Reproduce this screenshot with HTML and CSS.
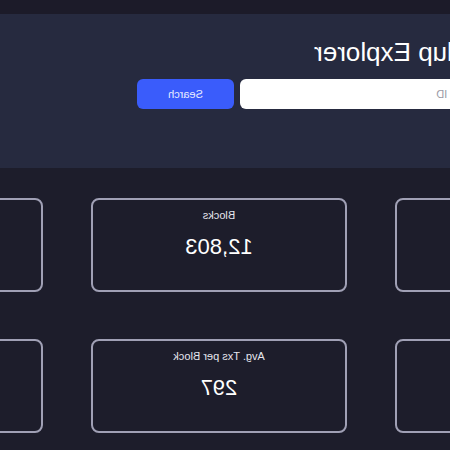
FILE: index.html
```html
<!DOCTYPE html>
<html lang="en">
<head>
<meta charset="utf-8">
<title>Rollup Explorer</title>
<link rel="stylesheet" href="styles.css">
</head>
<body>
<div class="page">
  <div class="topbar"></div>
  <header class="hero">
    <div class="hero-inner">
      <h1 class="title">Rollup Explorer</h1>
      <form class="search">
        <input class="search-input" type="text" placeholder="Search by Block Number, Tx Hash or ID">
        <button class="search-btn" type="button">Search</button>
      </form>
    </div>
  </header>
  <main class="stats">
    <div class="card"><div class="label">Transactions</div><div class="value">3,802,511</div></div>
    <div class="card"><div class="label">Blocks</div><div class="value">12,803</div></div>
    <div class="card"><div class="label">Batches</div><div class="value">1,204</div></div>
    <div class="card"><div class="label">Avg. Block Time</div><div class="value">3.0s</div></div>
    <div class="card"><div class="label">Avg. Txs per Block</div><div class="value">297</div></div>
    <div class="card"><div class="label">Pending Txs</div><div class="value">18</div></div>
  </main>
</div>
</body>
</html>
```
FILE: styles.css
```css
html, body {
  margin: 0;
  padding: 0;
  background: #1d1d2b;
  overflow: hidden;
}
body {
  width: 450px;
  height: 450px;
  font-family: "Liberation Sans", Arial, sans-serif;
}
.page {
  width: 450px;
  height: 450px;
  transform: scaleX(-1);
  overflow: hidden;
  background: #1d1d2b;
}
.topbar {
  height: 14px;
  background: #1c1b29;
}
.hero {
  height: 154px;
  background: #262a3f;
}
.hero-inner {
  width: 600px;
  margin-left: -240px;
  padding-top: 24px;
  display: flex;
  flex-direction: column;
  align-items: center;
}
.title {
  margin: 0 26px 0 0;
  font-size: 26px;
  line-height: 28px;
  font-weight: 400;
  color: #ffffff;
  text-align: center;
}
.search {
  margin: 13px 0 0 0;
  width: 506px;
  display: flex;
  gap: 6px;
}
.search-input {
  flex: 1;
  height: 30px;
  box-sizing: border-box;
  border: none;
  border-radius: 6px;
  background: #ffffff;
  padding: 0 12px;
  font-family: "Liberation Sans", Arial, sans-serif;
  font-size: 11px;
  outline: none;
}
.search-input::placeholder {
  color: #9a9aa6;
}
.search-btn {
  width: 97px;
  height: 30px;
  border: none;
  border-radius: 6px;
  background: #3a5cfb;
  color: #e8ecff;
  font-family: "Liberation Sans", Arial, sans-serif;
  font-size: 11px;
  padding: 0;
}
.stats {
  margin-top: 30px;
  margin-left: -201px;
  display: grid;
  grid-template-columns: repeat(3, 256px);
  column-gap: 48px;
  row-gap: 47px;
}
.card {
  height: 94px;
  box-sizing: border-box;
  border: 2px solid #a0a0b5;
  border-radius: 8px;
  padding-top: 9px;
  text-align: center;
  color: #ffffff;
}
.label {
  font-size: 11px;
  line-height: 13px;
  color: #e6e6ee;
}
.value {
  margin-top: 12px;
  font-size: 22px;
  line-height: 26px;
  color: #ffffff;
}
```
